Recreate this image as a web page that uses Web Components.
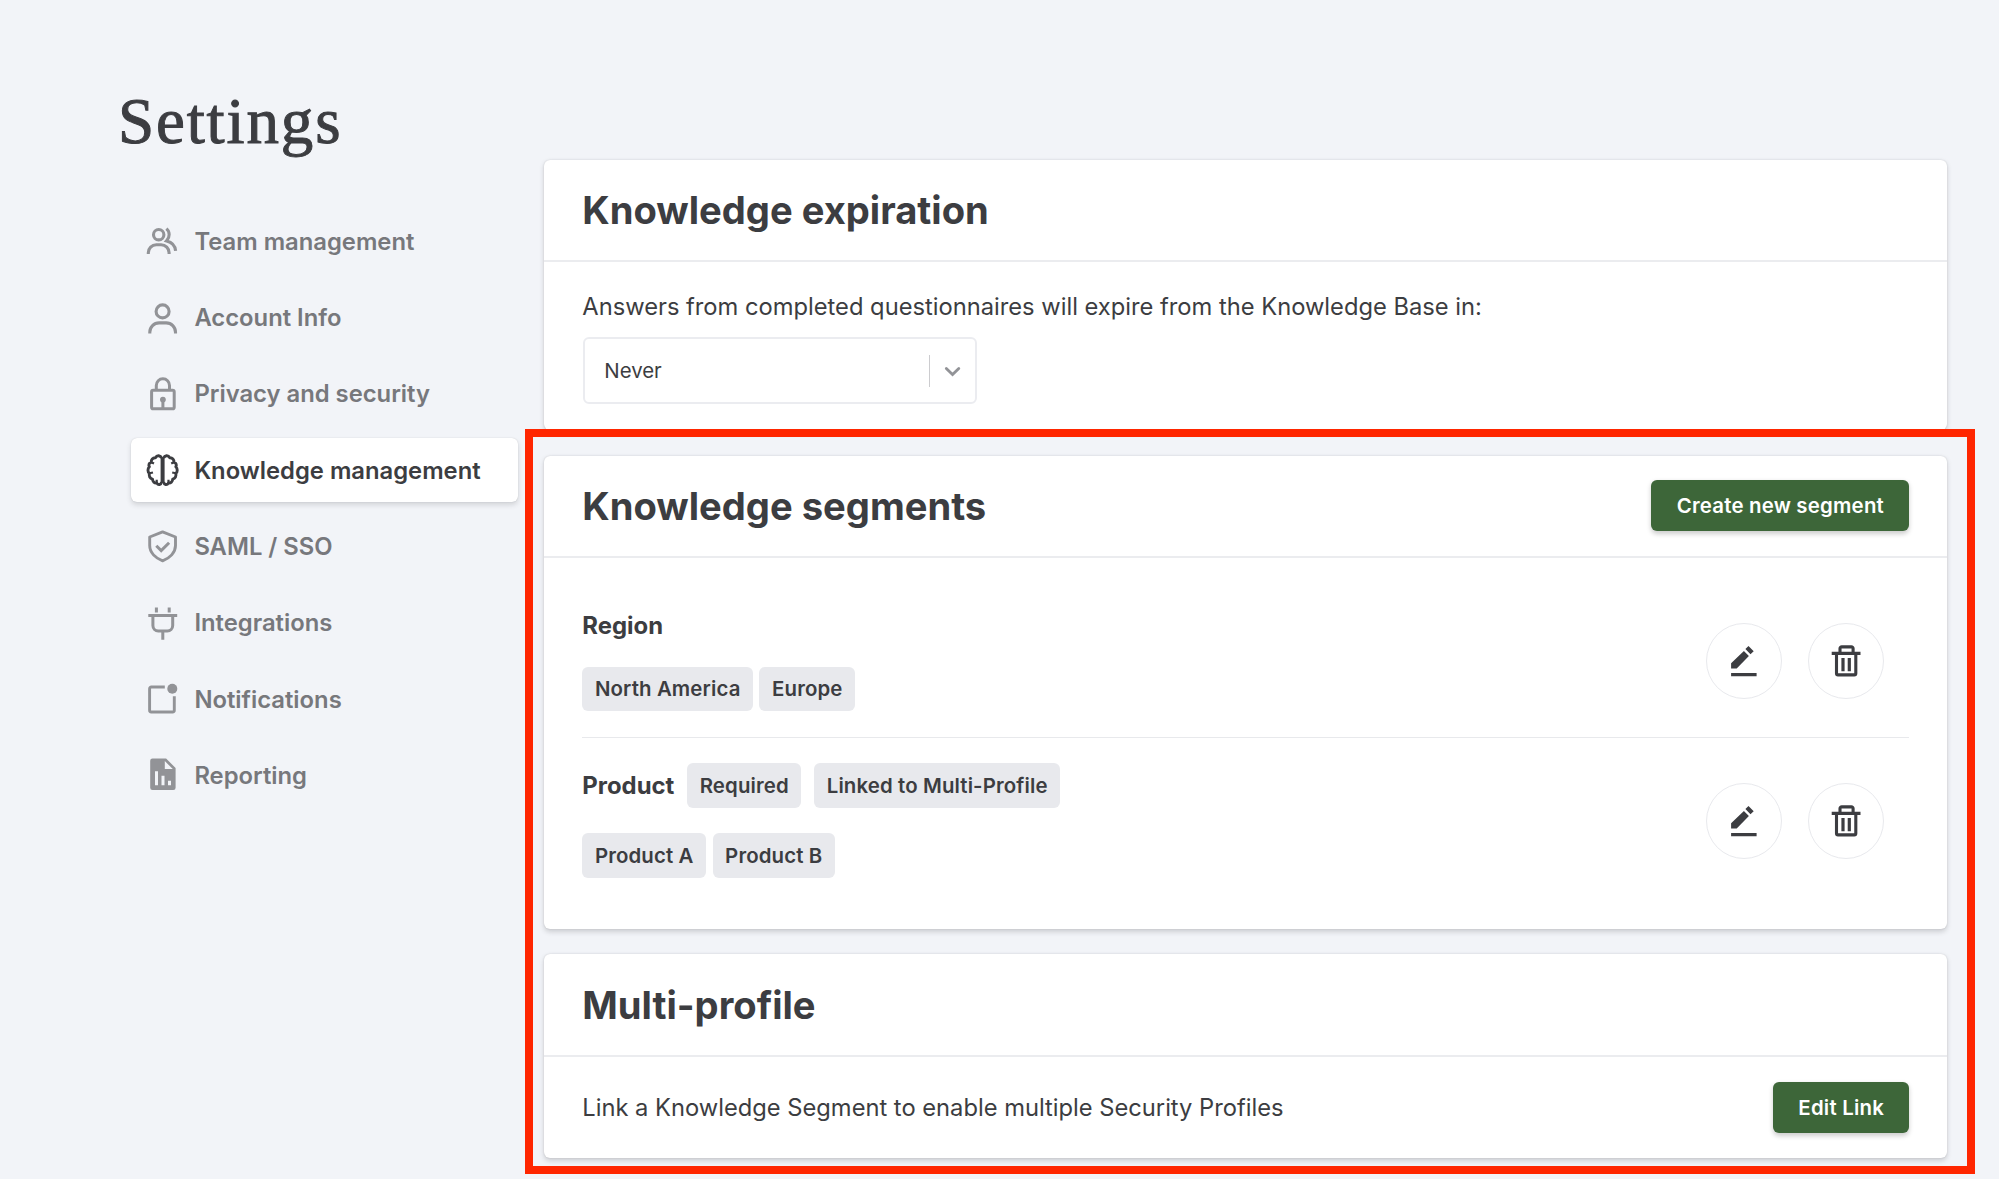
<!DOCTYPE html>
<html lang="en">
<head>
<meta charset="utf-8">
<title>Settings</title>
<style>
  html, body {
    margin: 0;
    height: 1179px;
    overflow: hidden;
    background: #f2f4f8;
    color: #3c3d41;
    font-family: Inter, "Liberation Sans", sans-serif;
  }
</style>
</head>
<body>
<settings-page>
  <nav-item slot="nav" icon="team">Team management</nav-item>
  <nav-item slot="nav" icon="account">Account Info</nav-item>
  <nav-item slot="nav" icon="lock">Privacy and security</nav-item>
  <nav-item slot="nav" icon="brain" active>Knowledge management</nav-item>
  <nav-item slot="nav" icon="shield">SAML / SSO</nav-item>
  <nav-item slot="nav" icon="plug">Integrations</nav-item>
  <nav-item slot="nav" icon="notify">Notifications</nav-item>
  <nav-item slot="nav" icon="report">Reporting</nav-item>

  <settings-card style="height: 270px">
    <span slot="title">Knowledge expiration</span>
    <expiration-field value="Never">Answers from completed questionnaires will expire from the Knowledge Base in:</expiration-field>
  </settings-card>

  <settings-card style="height: 473px">
    <span slot="title">Knowledge segments</span>
    <green-button slot="action">Create new segment</green-button>
    <segment-row style="--top: 52px; --bottom: 26px; --gap: 25px" line>
      <span slot="name">Region</span>
      <tag-chip slot="values">North America</tag-chip>
      <tag-chip slot="values">Europe</tag-chip>
    </segment-row>
    <segment-row style="--top: 25px; --bottom: 20px; --gap: 25.5px">
      <span slot="name">Product</span>
      <tag-chip slot="flags">Required</tag-chip>
      <tag-chip slot="flags">Linked to Multi-Profile</tag-chip>
      <tag-chip slot="values">Product A</tag-chip>
      <tag-chip slot="values">Product B</tag-chip>
    </segment-row>
  </settings-card>

  <settings-card style="height: 204px">
    <span slot="title">Multi-profile</span>
    <link-row>
      Link a Knowledge Segment to enable multiple Security Profiles
      <green-button slot="action">Edit Link</green-button>
    </link-row>
  </settings-card>
</settings-page>

<script>
// every icon is drawn on a 36x36 grid
const ICONS = {
  team: `<g fill="none" stroke="currentColor" stroke-width="3.1">
    <circle cx="14.7" cy="11.700" r="5.2"/>
    <path d="M4.3 30.900v-1.2a8 8 0 0 1 8-8h4.8a8 8 0 0 1 8 8v1.2"/>
    <path d="M22.4 5.600c3.6 3 3.7 8.5.2 12.3 5 1.2 8.6 4.8 9 9.9"/></g>`,
  account: `<g fill="none" stroke="currentColor" stroke-width="3.1">
    <circle cx="18.6" cy="11.4" r="6.5"/>
    <path d="M5.8 33.5v-1.3a9.3 9.3 0 0 1 9.3-9.3h7.1a9.3 9.3 0 0 1 9.3 9.3v1.3"/></g>`,
  lock: `<g fill="none" stroke="currentColor" stroke-width="3">
    <rect x="7.6" y="14.2" width="22.6" height="18.6" rx="1.6"/>
    <path d="M12.3 14v-4.6a6.6 6.6 0 0 1 13.2 0v4.6M18.9 24v8.6"/></g>
    <circle cx="18.9" cy="23.6" r="2.9" fill="currentColor"/>`,
  brain: `<g fill="none" stroke="currentColor" stroke-width="2.9" stroke-linejoin="round">
    <path d="M18.6 5v26" stroke-width="4"/>
    <path d="M17.6 6C16.6 3.3 13 2.8 11.4 5.7 8.8 5.6 7 7.5 7.2 10.2 4.8 11.2 4.4 13.2 5.400 14.8 3.500 16.6 3.500 19.8 5.400 21.3 4.600 24 6 26.500 8.500 27.100 8.500 29.800 10.500 31.300 12.700 31 14.300 33.500 17 32.900 17.600 30"/>
    <path d="M19.600 6C20.600 3.300 24.200 2.800 25.800 5.700 28.400 5.600 30.200 7.500 30 10.200 32.400 11.200 32.800 13.200 31.800 14.800 33.700 16.600 33.700 19.800 31.800 21.300 32.600 24 31.200 26.500 28.700 27.100 28.700 29.800 26.700 31.300 24.500 31 22.900 33.500 20.200 32.900 19.600 30"/>
    <path d="M7.200 10.200l2.800 1.400M5.400 21.300l3.600-.8M12.700 31v-3.200M30 10.200l-2.800 1.400M31.800 21.300l-3.600-.8M24.500 31v-3.200" stroke-width="2.200"/></g>`,
  shield: `<g fill="none" stroke="currentColor" stroke-width="2.9">
    <path d="M18.600 3.900 5.700 9v8.600c0 7 5.800 12.700 12.900 15.200 7.100-2.500 12.900-8.200 12.900-15.200V9z" stroke-linejoin="round"/>
    <path d="M12.300 17.700l4.900 4.900 7.900-7.900" stroke-width="3"/></g>`,
  plug: `<g fill="none" stroke="currentColor" stroke-width="3">
    <path d="M12.400 2.600v4.800M25.200 2.600v4.800M4.300 10.400h28.900M18.800 25.500v9.200"/>
    <path d="M8.900 10.400v10.200a5.400 5.400 0 0 0 5.400 5.400h9a5.400 5.400 0 0 0 5.400-5.400V10.400"/></g>`,
  notify: `<path d="M20.800 6H7.300a1.700 1.700 0 0 0-1.700 1.700v21.600A1.700 1.700 0 0 0 7.300 31h21.300a1.700 1.700 0 0 0 1.700-1.700V15.300" fill="none" stroke="currentColor" stroke-width="2.900"/>
    <circle cx="28.300" cy="7.700" r="5" fill="currentColor"/>`,
  report: `<path fill="currentColor" fill-rule="evenodd" d="M8.500 1.500h13.600L31.600 11v19.800a2.300 2.300 0 0 1-2.300 2.300H8.500a2.300 2.300 0 0 1-2.300-2.300V3.800A2.300 2.300 0 0 1 8.500 1.500zM20.800 4.100v8h8zM11 14.300v14h3v-14zM17.500 18.800v9.500h3v-9.500zM24 23.700v4.600h3v-4.600z"/>`,
  pencil: `<path fill="currentColor" d="M5.100 25.400V20.200L17.900 8l5 4.900L10.700 25.400zM19.400 6.100l3.100-3.100 5.200 5.200-3.200 3.100zM5.100 30h25.500v3.300H5.100z"/>`,
  trash: `<g fill="none" stroke="currentColor" stroke-width="3.1">
    <path d="M3.700 10.400h28.800M12 10.400V5.600a1.700 1.700 0 0 1 1.700-1.700h9.700a1.700 1.700 0 0 1 1.700 1.700v4.800M8.500 10.400v20a1.500 1.500 0 0 0 1.500 1.500h16.300a1.500 1.500 0 0 0 1.500-1.500v-20"/>
    <path d="M15 15v13.200M21.300 15v13.200" stroke-width="3.200"/></g>`
};

function makeTemplate(html) {
  const template = document.createElement('template');
  template.innerHTML = html;
  return template;
}

class BaseElement extends HTMLElement {
  constructor() {
    super();
    this.attachShadow({mode: 'open'});
    this.shadowRoot.appendChild(this.constructor.template.content.cloneNode(true));
  }
}

class UiIcon extends BaseElement {
  static template = makeTemplate(`
<style>
  :host { display: block; width: 36px; height: 36px; flex: none; }
  svg { display: block; width: 36px; height: 36px; }
</style>
<svg viewBox="0 0 36 36"></svg>`);

  static get observedAttributes() { return ['name']; }

  attributeChangedCallback(attr, old, value) {
    this.shadowRoot.querySelector('svg').innerHTML = ICONS[value] || '';
  }
}

class SettingsPage extends BaseElement {
  static template = makeTemplate(`
<style>
  :host {
    display: grid;
    grid-template-columns: 425px 1403px;
    position: relative;
    width: 1999px;
    height: 1179px;
    padding-left: 119px;
    box-sizing: border-box;
  }
  h1 {
    margin: 83px 0 0 -1px;
    height: 77px;
    font: 400 65px/76px "Liberation Serif", serif;
    letter-spacing: 1.85px;
    -webkit-text-stroke: 1px currentColor;
  }
  nav {
    display: flex;
    flex-direction: column;
    gap: 12.6px;
    width: 387.3px;
    margin: 49.5px 0 0 12px;
  }
  main {
    display: flex;
    flex-direction: column;
    gap: 25.7px;
    padding-top: 160px;
  }
  /* highlight drawn over the cards */
  .frame {
    position: absolute;
    left: 525px;
    top: 428.5px;
    width: 1450.2px;
    height: 745.5px;
    box-sizing: border-box;
    border: 8px solid #ff2600;
    pointer-events: none;
  }
</style>
<aside>
  <h1>Settings</h1>
  <nav><slot name="nav"></slot></nav>
</aside>
<main><slot></slot></main>
<div class="frame"></div>`);
}

class NavItem extends BaseElement {
  static template = makeTemplate(`
<style>
  :host {
    display: flex;
    align-items: center;
    gap: 14.4px;
    height: 63.7px;
    padding-left: 13px;
    box-sizing: border-box;
    border-radius: 6px;
    color: #77787c;
    font-size: 23.8px;
    font-weight: 600;
    white-space: nowrap;
  }
  ui-icon { color: #929397; }
  :host([active]) {
    background: #fff;
    color: #3c3d41;
    box-shadow: 0 0 1px rgba(60, 61, 65, .25), 0 3px 5px rgba(60, 61, 65, .17);
  }
  :host([active]) ui-icon { color: #3c3d41; }
</style>
<ui-icon></ui-icon>
<span><slot></slot></span>`);

  connectedCallback() {
    this.shadowRoot.querySelector('ui-icon').setAttribute('name', this.getAttribute('icon'));
  }
}

class SettingsCard extends BaseElement {
  static template = makeTemplate(`
<style>
  :host {
    display: block;
    flex: none;
    box-sizing: border-box;
    background: #fff;
    border-radius: 6px;
    box-shadow: 0 0 1.5px rgba(60, 61, 65, .2), 0 2.5px 5px rgba(60, 61, 65, .2);
  }
  header {
    display: flex;
    align-items: center;
    justify-content: space-between;
    height: 102.3px;
    padding: 0 37.7px 0 38.3px;
    box-sizing: border-box;
    border-bottom: 2px solid #ebecef;
  }
  h2 {
    margin: 0;
    font-size: 38.15px;
    line-height: 46px;
    font-weight: 700;
  }
</style>
<header>
  <h2><slot name="title"></slot></h2>
  <slot name="action"></slot>
</header>
<slot></slot>`);
}

class GreenButton extends BaseElement {
  static template = makeTemplate(`
<style>
  :host { display: block; }
  button {
    display: block;
    height: 51px;
    padding: 0 25.3px;
    border: 0;
    border-radius: 6px;
    background: #3d6639;
    color: #fff;
    font: 600 20.4px Inter, sans-serif;
    letter-spacing: .22px;
    white-space: nowrap;
    box-shadow: 0 2.5px 5px rgba(0, 0, 0, .2);
  }
</style>
<button><slot></slot></button>`);
}

class ExpirationField extends BaseElement {
  static template = makeTemplate(`
<style>
  :host { display: block; padding: 29.7px 38.3px 0; }
  p { margin: 0 0 15.5px; font-size: 23.71px; line-height: 30px; }
  .select {
    display: flex;
    align-items: center;
    width: 393.5px;
    height: 67px;
    margin-left: 1px;
    box-sizing: border-box;
    border: 2px solid #ebecf0;
    border-radius: 6px;
    font-size: 20.4px;
    line-height: 24px;
  }
  .value { flex: 1; padding-left: 19px; }
  .line { width: 1.5px; height: 32px; background: #cccccf; }
  svg { display: block; width: 44.5px; height: 30px; }
</style>
<p><slot></slot></p>
<div class="select">
  <span class="value"></span>
  <span class="line"></span>
  <svg viewBox="0 0 45 30"><path d="M16.5 12.5l6.3 6 6.3-6" fill="none" stroke="#929397" stroke-width="2.9" stroke-linecap="round"/></svg>
</div>`);

  connectedCallback() {
    this.shadowRoot.querySelector('.value').textContent = this.getAttribute('value');
  }
}

class TagChip extends BaseElement {
  static template = makeTemplate(`
<style>
  :host {
    display: flex;
    align-items: center;
    height: 44.5px;
    padding: 0 12.6px;
    border-radius: 6px;
    background: #e8e9ed;
    font-size: 20.4px;
    line-height: 24px;
    font-weight: 600;
    letter-spacing: .13px;
    white-space: nowrap;
  }
</style>
<slot></slot>`);
}

class SegmentRow extends BaseElement {
  static template = makeTemplate(`
<style>
  :host {
    display: flex;
    align-items: center;
    justify-content: space-between;
    margin: 0 38.3px;
    padding: var(--top) 24.7px var(--bottom) 0;
  }
  :host([line]) { border-bottom: 1.5px solid #e8e9ec; }
  .info { display: flex; flex-direction: column; gap: var(--gap); }
  .name { display: flex; align-items: center; gap: 12.76px; font-size: 23.9px; font-weight: 700; line-height: 32px; }
  .values { display: flex; gap: 6.38px; }
  .actions { display: flex; gap: 26px; }
  button {
    display: flex;
    align-items: center;
    justify-content: center;
    width: 76px;
    height: 76px;
    padding: 0;
    border: 1.5px solid #e8e9ed;
    border-radius: 50%;
    background: #fff;
    color: #3c3d41;
  }
</style>
<div class="info">
  <div class="name"><slot name="name"></slot><slot name="flags"></slot></div>
  <div class="values"><slot name="values"></slot></div>
</div>
<div class="actions">
  <button aria-label="Edit"><ui-icon name="pencil"></ui-icon></button>
  <button aria-label="Delete"><ui-icon name="trash"></ui-icon></button>
</div>`);
}

class LinkRow extends BaseElement {
  static template = makeTemplate(`
<style>
  :host {
    display: flex;
    align-items: center;
    justify-content: space-between;
    height: 102px;
    padding: 0 37.7px 0 38.3px;
    font-size: 23.71px;
  }
</style>
<span><slot></slot></span>
<slot name="action"></slot>`);
}

window.customElements.define('ui-icon', UiIcon);
window.customElements.define('settings-page', SettingsPage);
window.customElements.define('nav-item', NavItem);
window.customElements.define('settings-card', SettingsCard);
window.customElements.define('green-button', GreenButton);
window.customElements.define('expiration-field', ExpirationField);
window.customElements.define('tag-chip', TagChip);
window.customElements.define('segment-row', SegmentRow);
window.customElements.define('link-row', LinkRow);
</script>
</body>
</html>
